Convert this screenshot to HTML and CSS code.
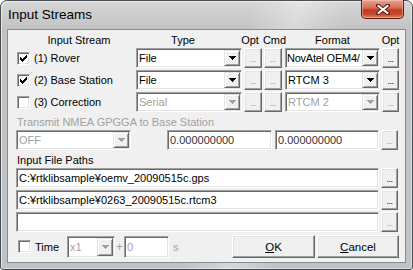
FILE: index.html
```html
<!DOCTYPE html>
<html lang="en">
<head>
  <meta charset="UTF-8">
  <meta name="viewport" content="width=device-width, initial-scale=1.0">
  <title>Input Streams</title>
  <link rel="stylesheet" href="styles.css">
</head>
<body>
  <div class="window">
    <div class="titlebar">
      <span class="title">Input Streams</span>
      <div class="close-btn">
        <svg width="14" height="11" viewBox="0 0 14 11">
          <path d="M2 1.5 L12 9.5 M12 1.5 L2 9.5" stroke="#5a1f16" stroke-width="4" stroke-linecap="round"/>
          <path d="M2.5 2 L11.5 9 M11.5 2 L2.5 9" stroke="#fff" stroke-width="2.2" stroke-linecap="round"/>
        </svg>
      </div>
    </div>

    <div class="client">
      <!-- column headers -->
      <div class="head">
        <div class="c-stream head-stream">Input Stream</div>
        <div class="c-type head-type">Type</div>
        <div class="c-opt head-opt">Opt</div>
        <div class="c-cmd head-cmd">Cmd</div>
        <div class="c-format">Format</div>
        <div class="c-fopt">Opt</div>
      </div>

      <div class="row">
        <label class="c-stream check-label">
          <span class="check"><svg width="7" height="7" viewBox="0 0 7 7"><path d="M6 0h1v1h-1zM5 1h2v1h-2zM0 2h1v1h-1zM4 2h3v1h-3zM0 3h2v1h-2zM3 3h3v1h-3zM0 4h5v1h-5zM1 5h3v1h-3zM2 6h1v1h-1z"/></svg></span>
          (1) Rover
        </label>
        <div class="combo c-type"><span class="combo-text">File</span><span class="drop"><svg width="7" height="4" viewBox="0 0 7 4"><path d="M0 0H7V1H6V2H5V3H4V4H3V3H2V2H1V1H0Z"/></svg></span></div>
        <div class="btn dots off c-opt">...</div>
        <div class="btn dots off c-cmd">...</div>
        <div class="combo c-format"><span class="combo-text tight">NovAtel OEM4/</span><span class="drop"><svg width="7" height="4" viewBox="0 0 7 4"><path d="M0 0H7V1H6V2H5V3H4V4H3V3H2V2H1V1H0Z"/></svg></span></div>
        <div class="btn dots c-fopt">...</div>
      </div>

      <div class="row">
        <label class="c-stream check-label">
          <span class="check"><svg width="7" height="7" viewBox="0 0 7 7"><path d="M6 0h1v1h-1zM5 1h2v1h-2zM0 2h1v1h-1zM4 2h3v1h-3zM0 3h2v1h-2zM3 3h3v1h-3zM0 4h5v1h-5zM1 5h3v1h-3zM2 6h1v1h-1z"/></svg></span>
          (2) Base Station
        </label>
        <div class="combo c-type"><span class="combo-text">File</span><span class="drop"><svg width="7" height="4" viewBox="0 0 7 4"><path d="M0 0H7V1H6V2H5V3H4V4H3V3H2V2H1V1H0Z"/></svg></span></div>
        <div class="btn dots off c-opt">...</div>
        <div class="btn dots off c-cmd">...</div>
        <div class="combo c-format"><span class="combo-text">RTCM 3</span><span class="drop"><svg width="7" height="4" viewBox="0 0 7 4"><path d="M0 0H7V1H6V2H5V3H4V4H3V3H2V2H1V1H0Z"/></svg></span></div>
        <div class="btn dots c-fopt">...</div>
      </div>

      <div class="row">
        <label class="c-stream check-label">
          <span class="check"></span>
          (3) Correction
        </label>
        <div class="combo disabled c-type"><span class="combo-text">Serial</span><span class="drop"><svg width="7" height="4" viewBox="0 0 7 4"><path d="M0 0H7V1H6V2H5V3H4V4H3V3H2V2H1V1H0Z"/></svg></span></div>
        <div class="btn dots off c-opt">...</div>
        <div class="btn dots off c-cmd">...</div>
        <div class="combo disabled c-format"><span class="combo-text">RTCM 2</span><span class="drop"><svg width="7" height="4" viewBox="0 0 7 4"><path d="M0 0H7V1H6V2H5V3H4V4H3V3H2V2H1V1H0Z"/></svg></span></div>
        <div class="btn dots off c-fopt">...</div>
      </div>

      <div class="caption caption-nmea disabled-text">Transmit NMEA GPGGA to Base Station</div>
      <div class="row">
        <div class="combo disabled c-nmea"><span class="combo-text">OFF</span><span class="drop"><svg width="7" height="4" viewBox="0 0 7 4"><path d="M0 0H7V1H6V2H5V3H4V4H3V3H2V2H1V1H0Z"/></svg></span></div>
        <div class="edit pos c-lat">0.000000000</div>
        <div class="edit pos c-lon">0.000000000</div>
        <div class="btn dots off c-fopt">...</div>
      </div>

      <div class="caption caption-paths">Input File Paths</div>
      <div class="row">
        <div class="edit c-path">C:¥rtklibsample¥oemv_20090515c.gps</div>
        <div class="btn dots c-fopt">...</div>
      </div>
      <div class="row">
        <div class="edit c-path">C:¥rtklibsample¥0263_20090515c.rtcm3</div>
        <div class="btn dots c-fopt">...</div>
      </div>
      <div class="row">
        <div class="edit c-path"></div>
        <div class="btn dots off c-fopt">...</div>
      </div>

      <div class="bottom">
        <label class="check-label time-label">
          <span class="check"></span>
          Time
        </label>
        <div class="combo disabled c-speed"><span class="combo-text">x1</span><span class="drop"><svg width="7" height="4" viewBox="0 0 7 4"><path d="M0 0H7V1H6V2H5V3H4V4H3V3H2V2H1V1H0Z"/></svg></span></div>
        <span class="plus disabled-text">+</span>
        <div class="edit c-start disabled-text">0</div>
        <span class="unit disabled-text">s</span>
        <div class="btn push ok-btn"><u>O</u>K</div>
        <div class="btn push cancel-btn"><u>C</u>ancel</div>
      </div>
    </div>
  </div>
</body>
</html>
```

FILE: styles.css
```css
* {
  margin: 0;
  padding: 0;
  box-sizing: border-box;
}

body {
  background-color: #ffffff;
  font-family: "Liberation Sans", Arial, sans-serif;
  font-size: 11px;
  color: #000;
}

.window {
  width: 413px;
  height: 270px;
  display: flex;
  flex-direction: column;
  padding: 0 6px 6px;
  border: 1px solid #484d53;
  border-radius: 7px 7px 3px 3px;
  background:
    linear-gradient(105deg, rgba(255, 255, 255, 0) 52%, rgba(255, 255, 255, 0.35) 62%, rgba(255, 255, 255, 0) 72%),
    linear-gradient(180deg, #d6d6d6 0, #c3c3c3 28px, #bec2c6 100%);
  box-shadow: inset 1px 1px rgba(255, 255, 255, 0.6), inset -1px -1px rgba(255, 255, 255, 0.4);
}

/* title bar */

.titlebar {
  height: 28px;
  display: flex;
  align-items: flex-start;
}

.title {
  padding-left: 1px;
  font-size: 13.5px;
  line-height: 28px;
  color: #000;
}

.close-btn {
  width: 43px;
  height: 19px;
  margin: -1px 2px 0 auto;
  display: flex;
  align-items: center;
  justify-content: center;
  border: 1px solid #5b1b12;
  border-top: none;
  border-radius: 0 0 5px 5px;
  background: linear-gradient(180deg, #e6a595 0%, #d66a53 45%, #c23a22 55%, #c8492c 80%, #e3865e 100%);
  box-shadow: inset 0 0 0 1px rgba(255, 210, 190, 0.45);
}

/* dialog body */

.client {
  flex: 1;
  display: flex;
  flex-direction: column;
  padding: 0 6px 0 8px;
  border: 1px solid #868c93;
  background-color: #f0f0f0;
}

.head {
  height: 18px;
  padding-top: 2px;
  display: flex;
  line-height: 16px;
}

.head > div {
  display: flex;
  justify-content: center;
  white-space: nowrap;
}

.head-stream {
  padding-left: 6px;
}

.head-type {
  padding-right: 12px;
}

.head-opt {
  padding-right: 6px;
}

.head-cmd {
  padding-left: 3px;
}

.row {
  height: 20px;
  display: flex;
  margin-bottom: 2px;
}

/* column widths shared by header and rows */
.c-stream { width: 120px; }
.c-type { width: 106px; }
.c-opt { width: 18px; margin-left: 2px; }
.c-cmd { width: 18px; margin-left: 2px; }
.c-format { width: 95px; margin-left: 3px; }
.c-fopt { width: 17px; margin-left: 2px; }
.c-nmea { width: 115px; }
.c-lat { width: 105px; margin-left: 36px; }
.c-lon { width: 104px; margin-left: 3px; }
.c-path { width: 363px; }

.caption {
  height: 18px;
  padding-top: 2px;
  padding-left: 1px;
  line-height: 16px;
}

.caption-nmea {
  margin-top: -2px;
}

.caption-paths {
  margin-top: -2px;
}

.disabled-text {
  color: #a0a0a0;
}

/* check boxes */

.check-label {
  display: flex;
  align-items: center;
  gap: 4px;
  white-space: nowrap;
}

.check {
  width: 13px;
  height: 13px;
  margin-left: 1px;
  display: flex;
  align-items: center;
  justify-content: center;
  border: 1px solid;
  border-color: #a0a0a0 #ffffff #ffffff #a0a0a0;
  box-shadow: inset 1px 1px #696969, inset -1px -1px #e3e3e3;
  background-color: #fff;
}

.check svg {
  shape-rendering: crispEdges;
}

/* sunken fields */

.combo,
.edit {
  display: flex;
  padding: 1px;
  border: 1px solid;
  border-color: #a0a0a0 #ffffff #ffffff #a0a0a0;
  box-shadow: inset 1px 1px #696969, inset -1px -1px #e3e3e3;
  background-color: #fff;
  line-height: 16px;
  white-space: nowrap;
  overflow: hidden;
}

.combo-text {
  flex: 1;
  padding-left: 1px;
  overflow: hidden;
}

.combo-text.tight {
  padding-left: 0;
  letter-spacing: -0.25px;
}

.edit {
  padding-left: 2px;
}

.edit.pos {
  color: #333;
}

.combo.disabled .combo-text {
  color: #a0a0a0;
}

.drop {
  width: 16px;
  flex-shrink: 0;
  display: flex;
  align-items: center;
  justify-content: center;
  border: 1px solid;
  border-color: #e3e3e3 #696969 #696969 #e3e3e3;
  box-shadow: inset 1px 1px #ffffff, inset -1px -1px #a0a0a0;
  background-color: #f0f0f0;
}

.drop svg {
  shape-rendering: crispEdges;
  fill: #000;
}

.combo.disabled .drop svg {
  fill: #a0a0a0;
}

/* raised buttons */

.btn {
  display: flex;
  align-items: center;
  justify-content: center;
  border: 1px solid;
  border-color: #ffffff #696969 #696969 #ffffff;
  box-shadow: inset -1px -1px #a0a0a0, inset 1px 1px #e3e3e3;
  background-color: #f0f0f0;
  cursor: default;
}

.dots {
  font-size: 9px;
  line-height: 1;
  padding-top: 2px;
  letter-spacing: -0.5px;
}

.dots.off {
  color: #a0a0a0;
}

.bottom {
  height: 23px;
  margin-top: 1px;
  display: flex;
  align-items: center;
}

.time-label {
  width: 51px;
  padding-left: 1px;
}

.c-speed {
  width: 48px;
  height: 22px;
}

.plus {
  width: 9px;
  text-align: center;
  font-size: 12px;
}

.c-start {
  width: 45px;
  height: 22px;
  line-height: 18px;
}

.c-speed .combo-text {
  line-height: 18px;
}

.unit {
  margin-left: 4px;
}

.push {
  height: 23px;
  font-size: 11.5px;
}

.ok-btn {
  width: 83px;
  margin-left: auto;
}

.cancel-btn {
  width: 82px;
  margin-left: 2px;
}
```
